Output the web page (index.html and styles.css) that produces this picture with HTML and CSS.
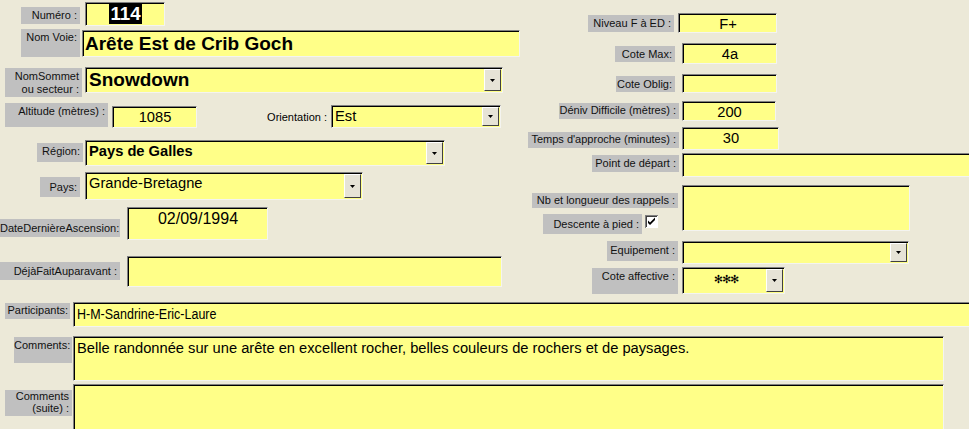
FILE: index.html
```html
<!DOCTYPE html>
<html lang="fr">
<head>
<meta charset="UTF-8">
<link rel="stylesheet" href="styles.css">
<title>Fiche Voie</title>
</head>
<body>
  <div class="form">
    <div class="top">
      <!-- colonne de gauche -->
      <div class="left">
        <div class="row r-numero">
          <div class="lbl l-numero">Numéro :</div>
          <div class="fld f-numero"><span class="sel">114</span></div>
        </div>
        <div class="row r-voie">
          <div class="lbl l-voie">Nom Voie:</div>
          <div class="fld f-voie">Arête Est de Crib Goch</div>
        </div>
        <div class="row r-sommet">
          <div class="lbl l-sommet">NomSommet<br>ou secteur :</div>
          <div class="fld combo f-sommet"><span class="val">Snowdown</span><span class="btn"><svg width="5" height="3"><path d="M0 0h5L2.5 3z"/></svg></span></div>
        </div>
        <div class="row r-alt">
          <div class="lbl l-alt">Altitude (mètres) :</div>
          <div class="fld f-alt">1085</div>
          <div class="l-orient">Orientation :</div>
          <div class="fld combo f-orient"><span class="val">Est</span><span class="btn"><svg width="5" height="3"><path d="M0 0h5L2.5 3z"/></svg></span></div>
        </div>
        <div class="row r-region">
          <div class="lbl l-region">Région:</div>
          <div class="fld combo f-region"><span class="val">Pays de Galles</span><span class="btn"><svg width="5" height="3"><path d="M0 0h5L2.5 3z"/></svg></span></div>
        </div>
        <div class="row r-pays">
          <div class="lbl l-pays">Pays:</div>
          <div class="fld combo f-pays"><span class="val">Grande-Bretagne</span><span class="btn"><svg width="5" height="3"><path d="M0 0h5L2.5 3z"/></svg></span></div>
        </div>
        <div class="row r-date">
          <div class="lbl l-date">DateDernièreAscension:</div>
          <div class="fld f-date">02/09/1994</div>
        </div>
        <div class="row r-deja">
          <div class="lbl l-deja">DéjàFaitAuparavant :</div>
          <div class="fld f-deja"></div>
        </div>
      </div>

      <!-- colonne de droite -->
      <div class="right">
        <div class="row r-niveau">
          <div class="rcell"><div class="lbl l-niveau">Niveau F à ED :</div></div>
          <div class="fld num f-niveau">F+</div>
        </div>
        <div class="row r-max">
          <div class="rcell"><div class="lbl l-max">Cote Max:</div></div>
          <div class="fld num f-max">4a</div>
        </div>
        <div class="row r-oblig">
          <div class="rcell"><div class="lbl l-oblig">Cote Oblig:</div></div>
          <div class="fld num f-oblig"></div>
        </div>
        <div class="row r-deniv">
          <div class="rcell"><div class="lbl l-deniv">Déniv Difficile (mètres) :</div></div>
          <div class="fld num f-deniv">200</div>
        </div>
        <div class="row r-temps">
          <div class="rcell"><div class="lbl l-temps">Temps d'approche (minutes) :</div></div>
          <div class="fld num f-temps">30</div>
        </div>
        <div class="row r-point">
          <div class="rcell"><div class="lbl l-point">Point de départ :</div></div>
          <div class="fld f-point"></div>
        </div>
        <div class="row r-rappels">
          <div class="rcell stack">
            <div class="lbl l-rappels">Nb et longueur des rappels :</div>
            <div class="descente">
              <div class="lbl l-descente">Descente à pied :</div>
              <svg class="check" width="13" height="13" viewBox="0 0 13 13">
                <rect x="0" y="0" width="13" height="13" fill="#808080"/>
                <rect x="1" y="1" width="12" height="12" fill="#fff"/>
                <rect x="1" y="1" width="11" height="11" fill="#404040"/>
                <rect x="2" y="2" width="10" height="10" fill="#fff"/>
                <path d="M3 5.5l2 2 5-5v2.5l-5 5-2-2z" fill="#000"/>
              </svg>
            </div>
          </div>
          <div class="fld f-rappels"></div>
        </div>
        <div class="row r-equip">
          <div class="rcell"><div class="lbl l-equip">Equipement :</div></div>
          <div class="fld combo f-equip"><span class="val"></span><span class="btn"><svg width="5" height="3"><path d="M0 0h5L2.5 3z"/></svg></span></div>
        </div>
        <div class="row r-affect">
          <div class="rcell"><div class="lbl l-affect">Cote affective :</div></div>
          <div class="fld combo f-affect"><span class="val stars">✻✻✻</span><span class="btn"><svg width="5" height="3"><path d="M0 0h5L2.5 3z"/></svg></span></div>
        </div>
      </div>
    </div>

    <div class="bottom">
      <div class="row r-part">
        <div class="lbl l-part">Participants:</div>
        <div class="fld f-part"><span class="narrow">H-M-Sandrine-Eric-Laure</span></div>
      </div>
      <div class="row r-comm">
        <div class="lbl l-comm">Comments:</div>
        <div class="fld f-comm">Belle randonnée sur une arête en excellent rocher, belles couleurs de rochers et de paysages.</div>
      </div>
      <div class="row r-suite">
        <div class="lbl l-suite">Comments<br>(suite) :</div>
        <div class="fld f-suite"></div>
      </div>
    </div>
  </div>
</body>
</html>
```
FILE: styles.css
```css
body {
  margin: 0;
  background-color: #ece9d8;
  font-family: "Liberation Sans", Arial, sans-serif;
  overflow: hidden;
}

.form {
  width: 969px;
  height: 429px;
  overflow: hidden;
}

.top {
  display: flex;
  height: 302px;
}

.left {
  width: 520px;
  flex-shrink: 0;
}

.right {
  flex: 1;
  padding-top: 13px;
  min-width: 0;
}

.row {
  display: flex;
  align-items: flex-start;
}

/* etiquettes grises */
.lbl {
  box-sizing: border-box;
  background-color: #c0c0c0;
  color: #111;
  font-size: 11px;
  line-height: 13px;
  text-align: right;
  padding: 2px 3px 0 0;
  white-space: nowrap;
  flex-shrink: 0;
}

/* champs jaunes, bord creux */
.fld {
  box-sizing: border-box;
  background-color: #ffff88;
  border: 1px solid;
  border-color: #808080 #f4f4f0 #f4f4f0 #808080;
  box-shadow: inset 1px 1px 0 #000;
  color: #000;
  font-size: 14.7px;
  line-height: 18px;
  padding: 1px 2px 0 3px;
  white-space: nowrap;
  overflow: hidden;
  flex-shrink: 0;
}

.num {
  text-align: center;
}

.combo {
  display: flex;
  padding: 1px 1px 1px 3px;
}

.combo .val {
  flex: 1;
  overflow: hidden;
}

.combo .btn {
  box-sizing: border-box;
  width: 17px;
  align-self: stretch;
  background-color: #e6e3d6;
  border: 1px solid;
  border-color: #fff #404040 #404040 #fff;
  display: flex;
  align-items: center;
  justify-content: center;
}

.combo .btn svg {
  display: block;
}

/* ligne par ligne, gauche */
.r-numero { height: 28px; }
.l-numero { margin: 7px 0 0 21px; width: 59px; height: 17px; padding-top: 2px; }
.f-numero {
  margin: 2px 0 0 5px; width: 80px; height: 24px;
  text-align: center; font-weight: bold; font-size: 18.7px; line-height: 20px;
}
.sel { background-color: #000; color: #fff; padding: 0 1px; }

.r-voie { height: 38px; }
.l-voie { margin: 1px 0 0 21px; width: 59px; height: 28px; }
.f-voie {
  margin: 2px 0 0 2px; width: 438px; height: 27px;
  font-weight: bold; font-size: 19px; line-height: 23px; padding-left: 2px;
}

.r-sommet { height: 36px; }
.l-sommet { margin: 2px 0 0 5px; width: 77px; height: 29px; }
.f-sommet { margin: 1px 0 0 3px; width: 418px; height: 26px; font-weight: bold; font-size: 19px; line-height: 22px; }

.r-alt { height: 37px; }
.l-alt { margin: 1px 0 0 5px; width: 103px; height: 24px; }
.f-alt { margin: 4px 0 0 4px; width: 85px; height: 22px; text-align: center; }
.l-orient {
  margin: 9px 0 0 65px; width: 65px; font-size: 11px; line-height: 13px;
  text-align: right; white-space: nowrap;
}
.f-orient { margin: 3px 0 0 4px; width: 170px; height: 23px; }

.r-region { height: 32px; }
.l-region { margin: 4px 0 0 37px; width: 46px; height: 19px; }
.f-region { margin: 1px 0 0 2px; width: 360px; height: 26px; font-weight: bold; }

.r-pays { height: 35px; }
.l-pays { margin: 6px 0 0 40px; width: 40px; height: 20px; padding-top: 4px; }
.f-pays { margin: 1px 0 0 5px; width: 278px; height: 28px; }

.r-date { height: 49px; }
.l-date { margin-top: 13px; width: 120px; height: 18px; padding-top: 3px; }
.f-date { margin: 1px 0 0 7px; width: 141px; height: 33px; text-align: center; font-size: 16px; line-height: 20px; }

.r-deja { height: 33px; }
.l-deja { margin-top: 7px; width: 120px; height: 18px; padding-top: 3px; }
.f-deja { margin: 1px 0 0 7px; width: 375px; height: 31px; }

/* colonne de droite */
.rcell {
  width: 160px;
  display: flex;
  justify-content: flex-end;
  flex-shrink: 0;
}

.rcell .lbl { margin-right: 1px; }
.right .fld { margin-left: 2px; }

.r-niveau { height: 30px; }
.l-niveau { margin-top: 2px; width: 86px; height: 17px; }
.rcell .l-niveau { margin-right: 6px; }
.right .f-niveau { margin-left: -2px; width: 99px; height: 20px; }

.r-max { height: 31px; }
.l-max { margin-top: 3px; width: 60px; height: 16px; }
.rcell .l-max { margin-right: 5px; }
.f-max { width: 95px; height: 21px; }

.r-oblig { height: 27px; }
.l-oblig { margin-top: 2px; width: 59px; height: 16px; }
.rcell .l-oblig { margin-right: 5px; }
.f-oblig { width: 95px; height: 19px; }

.r-deniv { height: 26px; }
.l-deniv { margin-top: 2px; width: 120px; height: 16px; padding-top: 1px; }
.f-deniv { width: 94px; height: 20px; }

.r-temps { height: 26px; }
.l-temps { margin-top: 5px; width: 151px; height: 16px; padding-top: 1px; }
.f-temps { width: 97px; height: 23px; }

.r-point { height: 32px; }
.l-point { margin-top: 2px; width: 87px; height: 17px; }
.f-point { width: 300px; height: 24px; }

.r-rappels { height: 56px; }
.stack {
  flex-direction: column;
  align-items: flex-end;
}
.rcell .l-rappels { margin: 8px 2px 0 0; width: 146px; height: 15px; padding-top: 1px; }
.descente {
  display: flex;
  align-items: flex-start;
  margin: 6px 22px 0 0;
}
.rcell .l-descente { margin-right: 3px; width: 99px; height: 20px; padding-top: 4px; }
.check { display: block; margin-top: 1px; }
.f-rappels { width: 228px; height: 46px; }

.r-equip { height: 26px; }
.l-equip { width: 71px; height: 20px; padding-top: 3px; }
.rcell .l-equip { margin-right: 2px; }
.f-equip { width: 227px; height: 23px; }

.r-affect { height: 27px; }
.l-affect { margin-top: 1px; width: 86px; height: 26px; }
.rcell .l-affect { margin-right: 2px; }
.f-affect { width: 103px; height: 27px; }
.stars {
  text-align: center;
  font-family: "DejaVu Sans", sans-serif;
  font-size: 11px;
  line-height: 22px;
  letter-spacing: -1px;
}

/* bas du formulaire */
.r-part { height: 34px; }
.l-part { margin: 1px 0 0 5px; width: 65px; height: 16px; padding: 1px 2px 0 0; }
.f-part { margin-left: 3px; width: 910px; height: 25px; line-height: 20px; }
.narrow {
  display: inline-block;
  transform: scaleX(0.85);
  transform-origin: left center;
}

.r-comm { height: 48px; }
.l-comm { margin: 1px 0 0 14px; width: 58px; height: 26px; padding-right: 2px; }
.f-comm { margin-left: 1px; width: 871px; height: 45px; padding-top: 2px; }

.l-suite { margin: 6px 0 0 5px; width: 67px; height: 26px; padding: 0 3px 0 0; line-height: 12px; }
.f-suite { margin-left: 1px; width: 871px; height: 60px; }
```
